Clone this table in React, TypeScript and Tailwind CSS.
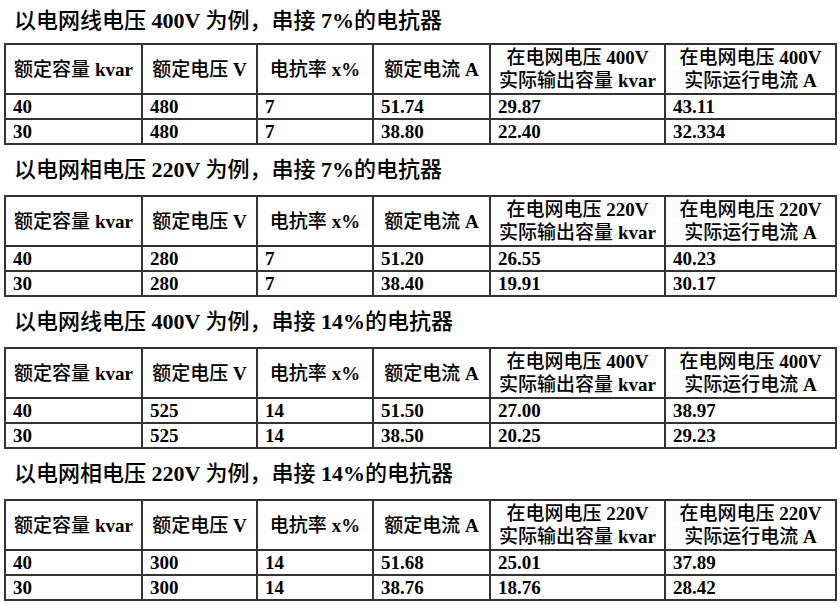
import React from "react";

const sections = [
    {
        title: "以电网线电压 400V 为例，串接 7%的电抗器",
        grid: "400V",
        rows: [
            ["40", "480", "7", "51.74", "29.87", "43.11"],
            ["30", "480", "7", "38.80", "22.40", "32.334"],
        ],
    },
    {
        title: "以电网相电压 220V 为例，串接 7%的电抗器",
        grid: "220V",
        rows: [
            ["40", "280", "7", "51.20", "26.55", "40.23"],
            ["30", "280", "7", "38.40", "19.91", "30.17"],
        ],
    },
    {
        title: "以电网线电压 400V 为例，串接 14%的电抗器",
        grid: "400V",
        rows: [
            ["40", "525", "14", "51.50", "27.00", "38.97"],
            ["30", "525", "14", "38.50", "20.25", "29.23"],
        ],
    },
    {
        title: "以电网相电压 220V 为例，串接 14%的电抗器",
        grid: "220V",
        rows: [
            ["40", "300", "14", "51.68", "25.01", "37.89"],
            ["30", "300", "14", "38.76", "18.76", "28.42"],
        ],
    },
];

const widths = [137, 115, 116, 117, 175, 171];

// latin runs in bold serif, chinese runs in sans
const Mixed = ({ text }: { text: string }) => {
    const parts = text.match(/[\x00-\x7F]+|[^\x00-\x7F]+/g) || [];
    return (
        <>
            {parts.map((p, i) =>
                /^[\x00-\x7F]+$/.test(p) ? (
                    <span key={i} className="font-bold whitespace-pre">
                        {p}
                    </span>
                ) : (
                    <span key={i} className="font-medium">
                        {p}
                    </span>
                )
            )}
        </>
    );
};

const App = () => {
    return (
        <div
            className="w-[840px] h-[604px] bg-white text-black overflow-hidden"
            style={{ fontFamily: '"Liberation Serif", "Noto Sans CJK SC", serif' }}
        >
            {sections.map((s, si) => (
                <div key={si} className="pl-[4px]">
                    <div
                        className={
                            (si === 0 ? "h-[43px] leading-[41px]" : "h-[50px] leading-[50px]") +
                            " pl-[10px] text-[22px] whitespace-nowrap"
                        }
                    >
                        <Mixed text={s.title} />
                    </div>
                    <table className="table-fixed border-collapse w-[831px] text-[19px]">
                        <colgroup>
                            {widths.map((w, i) => (
                                <col key={i} style={{ width: w }} />
                            ))}
                        </colgroup>
                        <tbody>
                            <tr className="h-[50px]">
                                {[
                                    "额定容量 kvar",
                                    "额定电压 V",
                                    "电抗率 x%",
                                    "额定电流 A",
                                    `在电网电压 ${s.grid}\n实际输出容量 kvar`,
                                    `在电网电压 ${s.grid}\n实际运行电流 A`,
                                ].map((h, i) => (
                                    <td
                                        key={i}
                                        className="border-2 border-[#333] text-center leading-[23px] p-0"
                                    >
                                        {h.split("\n").map((line, li) => (
                                            <div key={li}>
                                                <Mixed text={line} />
                                            </div>
                                        ))}
                                    </td>
                                ))}
                            </tr>
                            {s.rows.map((r, ri) => (
                                <tr key={ri} className="h-[25px]">
                                    {r.map((c, ci) => (
                                        <td
                                            key={ci}
                                            className="border-2 border-[#333] px-[7px] py-0 leading-[21px] font-bold"
                                        >
                                            {c}
                                        </td>
                                    ))}
                                </tr>
                            ))}
                        </tbody>
                    </table>
                </div>
            ))}
        </div>
    );
};

export default App;
